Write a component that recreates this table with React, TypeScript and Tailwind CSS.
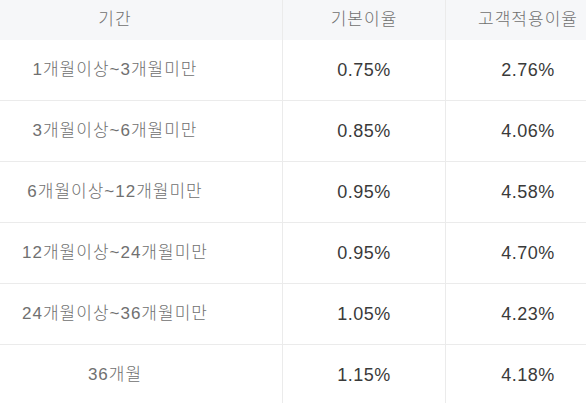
const rows = [
  { term: '1개월이상~3개월미만', base: '0.75%', applied: '2.76%' },
  { term: '3개월이상~6개월미만', base: '0.85%', applied: '4.06%' },
  { term: '6개월이상~12개월미만', base: '0.95%', applied: '4.58%' },
  { term: '12개월이상~24개월미만', base: '0.95%', applied: '4.70%' },
  { term: '24개월이상~36개월미만', base: '1.05%', applied: '4.23%' },
  { term: '36개월', base: '1.15%', applied: '4.18%' },
];

const font = "font-['Liberation_Sans','Noto_Sans_CJK_KR',sans-serif]";

export default function App() {
  return (
    <div className={`w-[586px] h-[403px] overflow-hidden bg-white ${font}`}>
      <div className="flex h-10 bg-[#f6f7f9] text-[17px] font-light tracking-[1px] text-[#707070]">
        <div className="w-[283px] shrink-0 pr-[52px] border-r border-[#ebebeb] flex items-center justify-center">기간</div>
        <div className="w-[163px] shrink-0 border-r border-[#ebebeb] flex items-center justify-center">기본이율</div>
        <div className="w-[164px] shrink-0 flex items-center justify-center">고객적용이율</div>
      </div>
      {rows.map((r) => (
        <div key={r.term} className="flex h-[61px] border-b border-[#ebebeb]">
          <div className="w-[283px] shrink-0 pr-[52px] border-r border-[#ebebeb] flex items-center justify-center text-[17px] font-light tracking-[1px] text-[#707070]">
            {r.term}
          </div>
          <div className="w-[163px] shrink-0 border-r border-[#ebebeb] flex items-center justify-center text-[18px] tracking-[0.5px] text-[#3a3a3a]">
            {r.base}
          </div>
          <div className="w-[164px] shrink-0 flex items-center justify-center text-[18px] tracking-[0.5px] text-[#3a3a3a]">
            {r.applied}
          </div>
        </div>
      ))}
    </div>
  );
}
